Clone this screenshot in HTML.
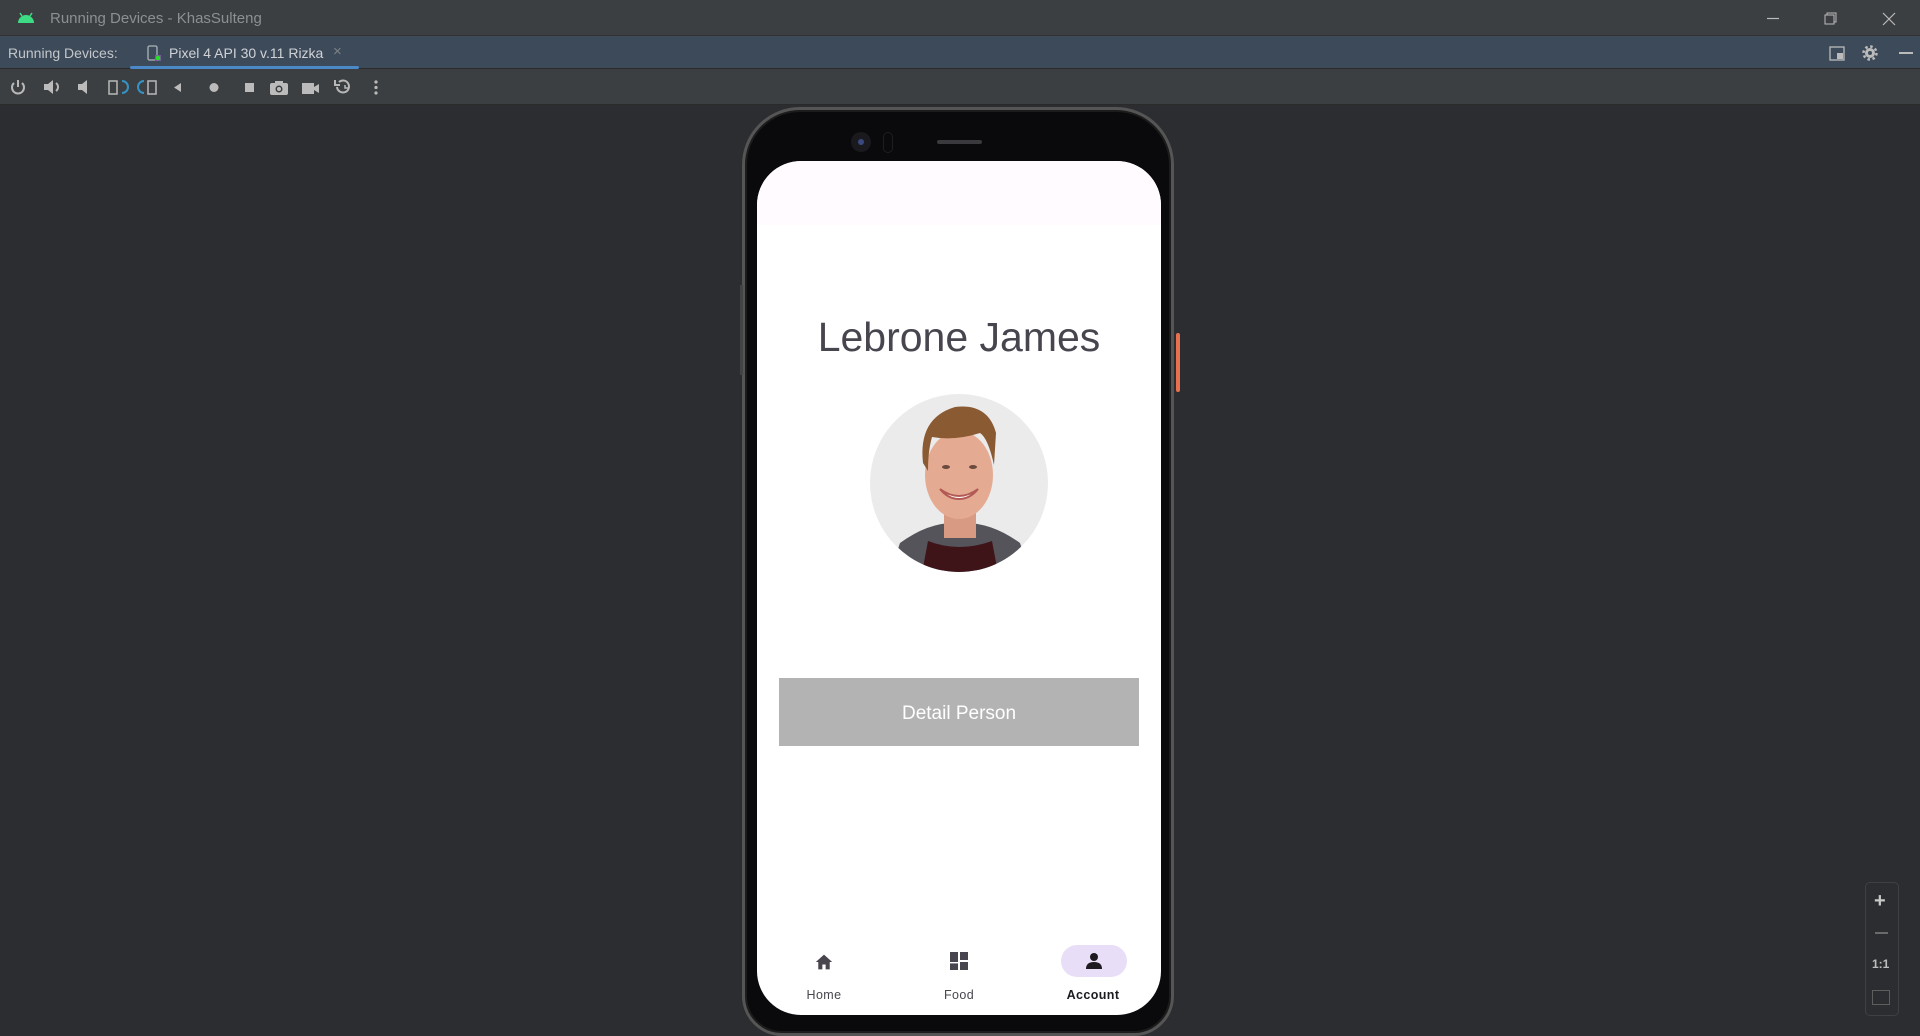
<!DOCTYPE html>
<html><head><meta charset="utf-8"><style>
*{margin:0;padding:0;box-sizing:border-box}
html,body{width:1920px;height:1036px;overflow:hidden}
body{background:#2b2d30;font-family:"Liberation Sans",sans-serif}
#root{position:relative;width:1920px;height:1036px;overflow:hidden;background:#2b2d30}
.abs{position:absolute}
#title{left:0;top:0;width:1920px;height:36px;background:#3c3f41;border-bottom:1px solid #323232}
#tabs{left:0;top:36px;width:1920px;height:33px;background:#3d4a5a;border-bottom:1px solid #2b2b2b}
#tools{left:0;top:69px;width:1920px;height:36px;background:#3c3f41;border-bottom:1px solid #2a2a2a}
.t{color:#8f9296;font-size:15px}
.ic{fill:#bbbbbb}
</style></head><body><div id="root">
<div id="title" class="abs">
 <svg class="abs" style="left:16px;top:10px" width="20" height="14" viewBox="0 0 20 14"><path d="M2 13 A8 8 0 0 1 18 13Z" fill="#3ddc84"/><path d="M4 3 L6 6 M16 3 L14 6" stroke="#3ddc84" stroke-width="1.5"/></svg>
 <div class="abs t" style="left:50px;top:10px;color:#8c8f93">Running Devices - KhasSulteng</div>
 <svg class="abs" style="left:1760px;top:12px" width="160" height="14"><path d="M7 6.5h12" stroke="#bbb" stroke-width="1.2"/><rect x="65" y="3" width="9" height="9" fill="none" stroke="#bbb"/><path d="M67 3V1h9v9h-2" fill="none" stroke="#bbb"/><path d="M123 1l12 12M135 1l-12 12" stroke="#bbb" stroke-width="1.2"/></svg>
</div>
<div id="tabs" class="abs">
 <div class="abs" style="left:8px;top:9px;font-size:14px;color:#c4c7ca">Running Devices:</div>
 <svg class="abs" style="left:147px;top:9px" width="16" height="18"><rect x="1" y="1" width="9" height="14" rx="1.5" fill="none" stroke="#aeb3b9" stroke-width="1.3"/><rect x="8" y="10" width="6" height="6" fill="#7a5aa0"/><circle cx="11" cy="13" r="2.3" fill="#26e026"/></svg>
 <div class="abs" style="left:169px;top:9px;font-size:14px;color:#d0d3d6">Pixel 4 API 30 v.11 Rizka</div>
 <div class="abs" style="left:333px;top:7px;font-size:15px;color:#7c8187">×</div>
 <div class="abs" style="left:130px;top:30px;width:229px;height:3px;background:#4a88c7;border-radius:2px"></div>
 <svg class="abs" style="left:1826px;top:8px" width="94" height="18"><rect x="4" y="3" width="14" height="13" fill="none" stroke="#bbb" stroke-width="1.3"/><rect x="11" y="9" width="6" height="6" fill="#bbb"/><circle cx="44" cy="9" r="5" fill="#bbb"/><circle cx="44" cy="9" r="6.5" fill="none" stroke="#bbb" stroke-width="2.5" stroke-dasharray="2.5 2.6"/><circle cx="44" cy="9" r="2" fill="#3d4a5a"/><path d="M73 9h14" stroke="#bbb" stroke-width="2"/></svg>
</div>
<div id="tools" class="abs">
 <svg class="abs" style="left:8px;top:9px" width="380" height="18" viewBox="0 0 380 18">
  <g fill="none" stroke="#b8b8b8" stroke-width="2"><path d="M6 5A6 6 0 1 0 14 5"/><path d="M10 2v7"/></g>
  <path d="M36 6h4l5-4v14l-5-4h-4z" class="ic"/><path d="M48 5a5 5 0 0 1 0 8" fill="none" stroke="#b8b8b8" stroke-width="2"/>
  <path d="M70 6h4l5-4v14l-5-4h-4z" class="ic"/>
  <rect x="101" y="3" width="8" height="13" fill="none" stroke="#b8b8b8" stroke-width="1.5"/><path d="M114 3a4 4 0 0 1 0 12" fill="none" stroke="#3592c4" stroke-width="2"/>
  <path d="M136 3a4 4 0 0 0 0 12" fill="none" stroke="#3592c4" stroke-width="2"/><rect x="140" y="3" width="8" height="13" fill="none" stroke="#b8b8b8" stroke-width="1.5"/>
  <path d="M173 5v9l-7-4.5z" class="ic"/>
  <circle cx="206" cy="9.5" r="4.5" class="ic"/>
  <rect x="237" y="5" width="9" height="9" class="ic"/>
  <rect x="262" y="5" width="18" height="12" rx="2" class="ic"/><rect x="267" y="3" width="8" height="3" class="ic"/><circle cx="271" cy="11" r="3.5" fill="#3c3f41"/><circle cx="271" cy="11" r="2" class="ic"/>
  <rect x="294" y="5" width="12" height="11" class="ic"/><path d="M306 9l5-3v9l-5-3z" class="ic"/>
  <path d="M331 4a6 6 0 1 1-2 5" fill="none" stroke="#b8b8b8" stroke-width="2"/><path d="M327 2v5h5" fill="none" stroke="#b8b8b8" stroke-width="2"/><path d="M337 7v3h3" stroke="#b8b8b8" fill="none" stroke-width="1.5"/>
  <circle cx="368" cy="4" r="1.6" class="ic"/><circle cx="368" cy="9.5" r="1.6" class="ic"/><circle cx="368" cy="15" r="1.6" class="ic"/>
 </svg>
</div>

<!-- phone -->
<div class="abs" style="left:742px;top:107px;width:432px;height:929px;border-radius:58px 58px 40px 40px;background:#0a0a0c;border:3px solid #555;box-shadow:inset 0 0 0 2px #1c1c1c"></div>
<div class="abs" style="left:740px;top:285px;width:3px;height:90px;background:#444"></div>
<div class="abs" style="left:1176px;top:333px;width:4px;height:59px;background:#e8704e;border-radius:2px"></div>
<div class="abs" style="left:851px;top:132px;width:20px;height:20px;border-radius:50%;background:#1a1a1e"></div>
<div class="abs" style="left:858px;top:139px;width:6px;height:6px;border-radius:50%;background:#3a4a80"></div>
<div class="abs" style="left:883px;top:132px;width:10px;height:21px;border-radius:5px;border:1px solid #1e1e22"></div>
<div class="abs" style="left:937px;top:140px;width:45px;height:4px;border-radius:2px;background:#3a3a3e"></div>

<div class="abs" style="left:757px;top:161px;width:404px;height:854px;background:#fff;border-radius:44px;overflow:hidden">
 <div class="abs" style="left:0;top:0;width:404px;height:64px;background:#fffbfe"></div>
 <div class="abs" style="left:0;top:153px;width:404px;text-align:center;font-size:41px;color:#49454f">Lebrone James</div>
 <svg class="abs" style="left:113px;top:232px" width="178" height="180" viewBox="0 0 178 180">
  <defs><clipPath id="c"><circle cx="89" cy="90" r="89"/></clipPath></defs>
  <g clip-path="url(#c)">
   <rect width="178" height="180" fill="#ebebeb"/>
   <path d="M20 180 L30 150 Q60 128 89 130 Q120 128 150 150 L160 180Z" fill="#55545a"/>
   <path d="M52 180 L58 148 Q89 160 122 148 L128 180Z" fill="#3e1419"/>
   <rect x="74" y="105" width="32" height="40" fill="#d89a82"/>
   <ellipse cx="89" cy="82" rx="34" ry="44" fill="#e5ab92"/>
   <path d="M53 70 Q48 25 85 14 Q118 10 126 40 L124 72 Q118 45 110 40 Q85 48 62 44 Q58 58 58 78Z" fill="#8a5a33"/>
   <path d="M70 96 Q89 110 108 96 Q100 106 89 106 Q78 106 70 96Z" fill="#fff" stroke="#b35a55" stroke-width="2"/>
   <ellipse cx="76" cy="74" rx="4" ry="2" fill="#6b4a40"/><ellipse cx="103" cy="74" rx="4" ry="2" fill="#6b4a40"/>
  </g>
 </svg>
 <div class="abs" style="left:22px;top:517px;width:360px;height:68px;background:#b3b3b3;color:#fff;font-size:19px;text-align:center;line-height:72px">Detail Person</div>
 <svg class="abs" style="left:57px;top:792px" width="20" height="18" viewBox="0 0 24 22"><path d="M12 2 L2 11 H5 V20 H10 V14 H14 V20 H19 V11 H22Z" fill="#49454f"/></svg>
 <svg class="abs" style="left:193px;top:791px" width="18" height="18" viewBox="0 0 18 18"><rect x="0" y="0" width="8" height="18" fill="#49454f"/><rect x="10" y="0" width="8" height="8" fill="#49454f"/><rect x="10" y="10" width="8" height="8" fill="#49454f"/><rect x="0" y="10" width="8" height="1.4" fill="#fff"/></svg>
 <div class="abs" style="left:304px;top:784px;width:66px;height:32px;border-radius:16px;background:#e8def8"></div>
 <svg class="abs" style="left:328px;top:791px" width="18" height="18" viewBox="0 0 18 18"><circle cx="9" cy="5" r="4" fill="#1d1b20"/><path d="M1 17 Q1 10 9 10 Q17 10 17 17Z" fill="#1d1b20"/></svg>
 <div class="abs" style="left:17px;top:827px;width:100px;text-align:center;font-size:12.5px;color:#49454f;letter-spacing:.4px">Home</div>
 <div class="abs" style="left:152px;top:827px;width:100px;text-align:center;font-size:12.5px;color:#49454f;letter-spacing:.4px">Food</div>
 <div class="abs" style="left:286px;top:827px;width:100px;text-align:center;font-size:12.5px;color:#1d1b20;font-weight:bold;letter-spacing:.4px">Account</div>
</div>

<div class="abs" style="left:1865px;top:882px;width:34px;height:134px;border:1px solid #3e4043;border-radius:5px;background:#2b2d30"></div>
<div class="abs" style="left:1874px;top:890px;font-size:20px;color:#c8c8c8;font-weight:bold">+</div>
<div class="abs" style="left:1875px;top:932px;width:13px;height:2px;background:#6a6a6a"></div>
<div class="abs" style="left:1872px;top:957px;font-size:12px;color:#bdbdbd;font-weight:bold">1:1</div>
<div class="abs" style="left:1872px;top:990px;width:18px;height:15px;border:1.5px solid #5e5e5e"></div>
</div></body></html>
